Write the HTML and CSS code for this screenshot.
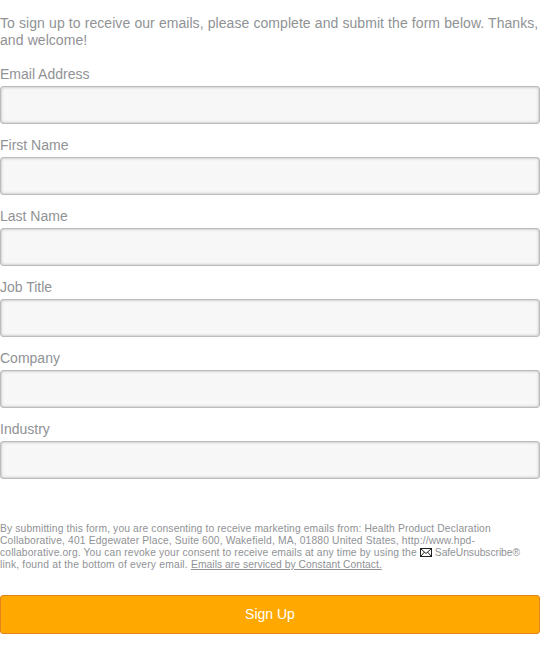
FILE: index.html
```html
<!DOCTYPE html>
<html lang="en">
<head>
<meta charset="utf-8">
<title>Sign Up</title>
<link rel="stylesheet" href="styles.css">
</head>
<body>
<form class="signup">
<p class="intro">To sign up to receive our emails, please complete and submit the form below. Thanks,<br>and welcome!</p>
<div class="field"><label for="email">Email Address</label><input id="email" type="text"></div>
<div class="field"><label for="first">First Name</label><input id="first" type="text"></div>
<div class="field"><label for="last">Last Name</label><input id="last" type="text"></div>
<div class="field"><label for="job">Job Title</label><input id="job" type="text"></div>
<div class="field"><label for="company">Company</label><input id="company" type="text"></div>
<div class="field"><label for="industry">Industry</label><input id="industry" type="text"></div>
<p class="disclosure">By submitting this form, you are consenting to receive marketing emails from: Health Product Declaration<br><span class="address">Collaborative, 401 Edgewater Place, Suite 600, Wakefield, MA, 01880 United States, http://www.hpd-</span><br>collaborative.org. You can revoke your consent to receive emails at any time by using the <svg class="mail" width="12" height="9" viewBox="0 0 12 9" aria-hidden="true"><rect x=".5" y=".5" width="11" height="8" fill="#fff" stroke="#222"/><path d="M1 1l5 4.500 5-4.500M1 8l3.500-4M11 8L7.500 4" fill="none" stroke="#222"/></svg> <span class="service">SafeUnsubscribe®</span><br><span class="closing">link, found at the bottom of every email. </span><a href="#">Emails are serviced by Constant Contact.</a></p>
<button type="button">Sign Up</button>
</form>
</body>
</html>
```
FILE: styles.css
```css
body {
  margin: 0;
  background: #fff;
  color: #909295;
  font-family: "Liberation Sans", Arial, sans-serif;
  font-size: 14px;
  line-height: 17px;
}

.signup {
  padding-top: 15px;
}

.intro {
  margin: 0 0 17px;
  white-space: nowrap;
  word-spacing: .2px;
  letter-spacing: .05px;
}

.field {
  margin-bottom: 13px;
}

.field label {
  display: block;
  margin-bottom: 3px;
}

.field input {
  display: block;
  box-sizing: border-box;
  width: 100%;
  height: 38px;
  border: 1px solid #bcbcbc;
  border-radius: 3px;
  background: #f7f7f7;
  box-shadow: inset 0 0 3px #aaa;
}

.disclosure {
  margin: 44px 0 24px;
  font-size: 10.3px;
  line-height: 12px;
  letter-spacing: .13px;
  white-space: nowrap;
}

.disclosure a {
  color: inherit;
  letter-spacing: .05px;
}

.address {
  letter-spacing: .15px;
}

.service {
  letter-spacing: -.05px;
}

.closing {
  letter-spacing: .2px;
}

.mail {
  vertical-align: -1px;
}

button {
  display: block;
  width: 100%;
  height: 39px;
  border: 1px solid #e0851a;
  border-radius: 3px;
  background: #ffa800;
  color: #fff;
  font: 14px "Liberation Sans", Arial, sans-serif;
  padding-bottom: 3px;
}
```
